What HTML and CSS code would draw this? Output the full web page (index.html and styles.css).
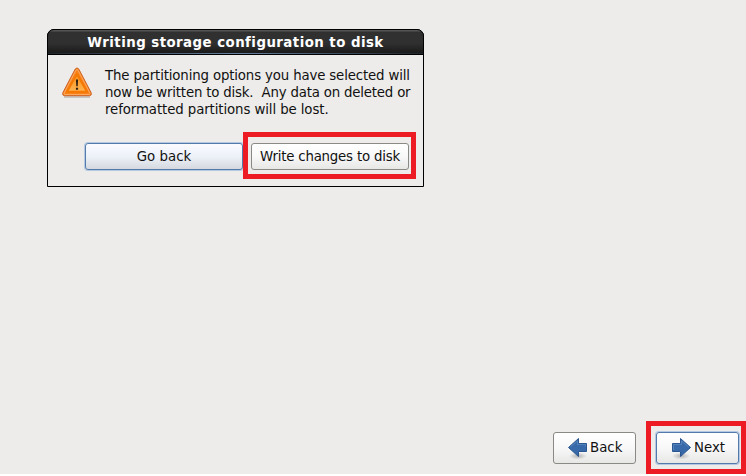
FILE: index.html
```
<!DOCTYPE html>
<html lang="en">
<head>
<meta charset="utf-8">
<title>Writing storage configuration to disk</title>
<link rel="stylesheet" href="styles.css">
</head>
<body>
<div class="screen">
  <section class="dialog">
    <h1 class="titlebar"><span>Writing storage configuration to disk</span></h1>
    <div class="content">
      <div class="message">
        <svg class="warning" width="32" height="32" viewBox="0 0 32 32">
          <defs>
            <linearGradient id="amber" x1="0" y1="0" x2="0" y2="1"><stop offset="0" stop-color="#f99020"/><stop offset="1" stop-color="#ffb450"/></linearGradient>
          </defs>
          <path d="M3 30H29" stroke="#bbb8b4" stroke-width="1.5"/>
          <path d="M14.2 2.1Q16 -.3 17.8 2.1L30.2 25.8Q31 28.7 28.4 28.7H3.6Q1 28.7 1.8 25.8Z" fill="#f9811a" stroke="#cb6328"/>
          <path d="M15 3.2Q16 1.5 17 3.2L29 26.3Q29.2 27.5 28 27.5H4Q2.8 27.5 3 26.3Z" fill="none" stroke="#fcaa60"/>
          <path d="M16 7L26 24.8H6Z" fill="url(#amber)" stroke="#f57900" stroke-width="2" stroke-linejoin="round"/>
          <path d="M14.9 12.5h2.2l-.4 6.8h-1.4zM14.9 20.7h2.2v2h-2.2z" fill="#302010"/>
        </svg>
        <p class="copy"><span class="line one">The partitioning options you have selected will</span><span class="line two">now be written to disk.&nbsp; Any data on deleted or</span><span class="line three">reformatted partitions will be lost.</span></p>
      </div>
      <div class="actions">
        <button class="button go focused">Go back</button>
        <div class="mark write-mark"><button class="button write">Write changes to disk</button></div>
      </div>
    </div>
  </section>
  <nav class="navigation">
    <button class="button nav back">
      <svg class="arrow" width="22" height="24" viewBox="0 0 22 24">
        <defs><radialGradient id="shade"><stop offset="0" stop-color="#777" stop-opacity=".5"/><stop offset="1" stop-color="#777" stop-opacity="0"/></radialGradient></defs>
        <ellipse cx="11" cy="20" rx="9" ry="3.5" fill="url(#shade)"/>
        <path d="M1.5 11.5L11.5 2.5V7.5H19.5V15.5H11.5V20.5Z" fill="#3869a9" stroke="#2b5690"/>
        <path d="M3.4 11L10.5 4.9V8.5H18.5V10.5" fill="none" stroke="#5c8ac0" stroke-width=".8"/>
      </svg><span>Back</span>
    </button>
    <div class="mark next-mark">
      <button class="button nav focused">
        <svg class="arrow" width="22" height="24" viewBox="0 0 22 24">
          <ellipse cx="11" cy="20" rx="9" ry="3.5" fill="url(#shade)"/>
          <path d="M20.5 11.5L10.5 2.5V7.5H2.5V15.5H10.5V20.5Z" fill="#3869a9" stroke="#2b5690"/>
          <path d="M18.6 11L11.5 4.9V8.5H3.5V14" fill="none" stroke="#5c8ac0" stroke-width=".8"/>
        </svg><span>Next</span>
      </button>
    </div>
  </nav>
</div>
</body>
</html>
```
FILE: styles.css
```
* { box-sizing: border-box; }
body { margin: 0; background: #edecea; color: #111; font-family: "DejaVu Sans", sans-serif; font-size: 13.33px; }
.screen { height: 476px; padding: 29px 0 0 47px; border-bottom: 2px solid #fff; display: flex; flex-direction: column; justify-content: space-between; overflow: hidden; }
.dialog { width: 377px; height: 158px; border: 1px solid #000; border-radius: 7px 7px 0 0; }
.titlebar { margin: -1px; height: 26px; padding-top: 1px; border: 1px solid #000; border-radius: 7px 7px 0 0; background: linear-gradient(90deg, #20242a, #6683a3 50%, #20242a) 0 100% / 100% 1px no-repeat, linear-gradient(#555 0, #555 1px, #303030 2px, #303030 55%, #202020 85%, #1a1a1a); color: #fff; font-size: 13.33px; line-height: 24px; font-weight: bold; letter-spacing: .46px; text-align: center; white-space: nowrap; }
.content { padding: 13px 7px 0 13px; }
.message { display: flex; height: 65px; }
.warning { flex: none; }
.copy { margin: 0 0 0 12px; line-height: 17px; }
.line { display: block; white-space: nowrap; }
.one { letter-spacing: -.15px; }
.two { letter-spacing: -.19px; }
.three { letter-spacing: -.1px; }
.actions { display: flex; align-items: flex-start; margin: 0 0 0 24px; }
.button { font: inherit; color: #111; padding: 0; border: 1px solid #8b8985; border-radius: 3px; background: linear-gradient(#fff, #f8f8f8 50%, #e7e7e6); white-space: nowrap; }
.button.focused { border-color: #537aaa; box-shadow: 0 0 0 1px #b4c9e2; }
.button.go { width: 158px; height: 27px; margin-top: 11px; background: linear-gradient(#f9fbff, #edf1f8 50%, #d5d9df); }
.mark { border: 5px solid #ed1c24; }
.write-mark { width: 173px; height: 47px; padding: 6px 2px 4px 3px; }
.write { width: 158px; height: 27px; letter-spacing: -.2px; }
.navigation { display: flex; justify-content: flex-end; align-items: flex-start; gap: 10px; }
.button.nav { width: 83px; height: 32px; display: flex; align-items: center; padding-left: 13px; }
.nav span { margin: 0 0 1px 1px; line-height: 17px; }
.back { margin-top: 11px; }
.next-mark { width: 100px; height: 53px; padding: 6px 2px 5px 5px; }
.next-mark span { margin-left: 2px; }
```
